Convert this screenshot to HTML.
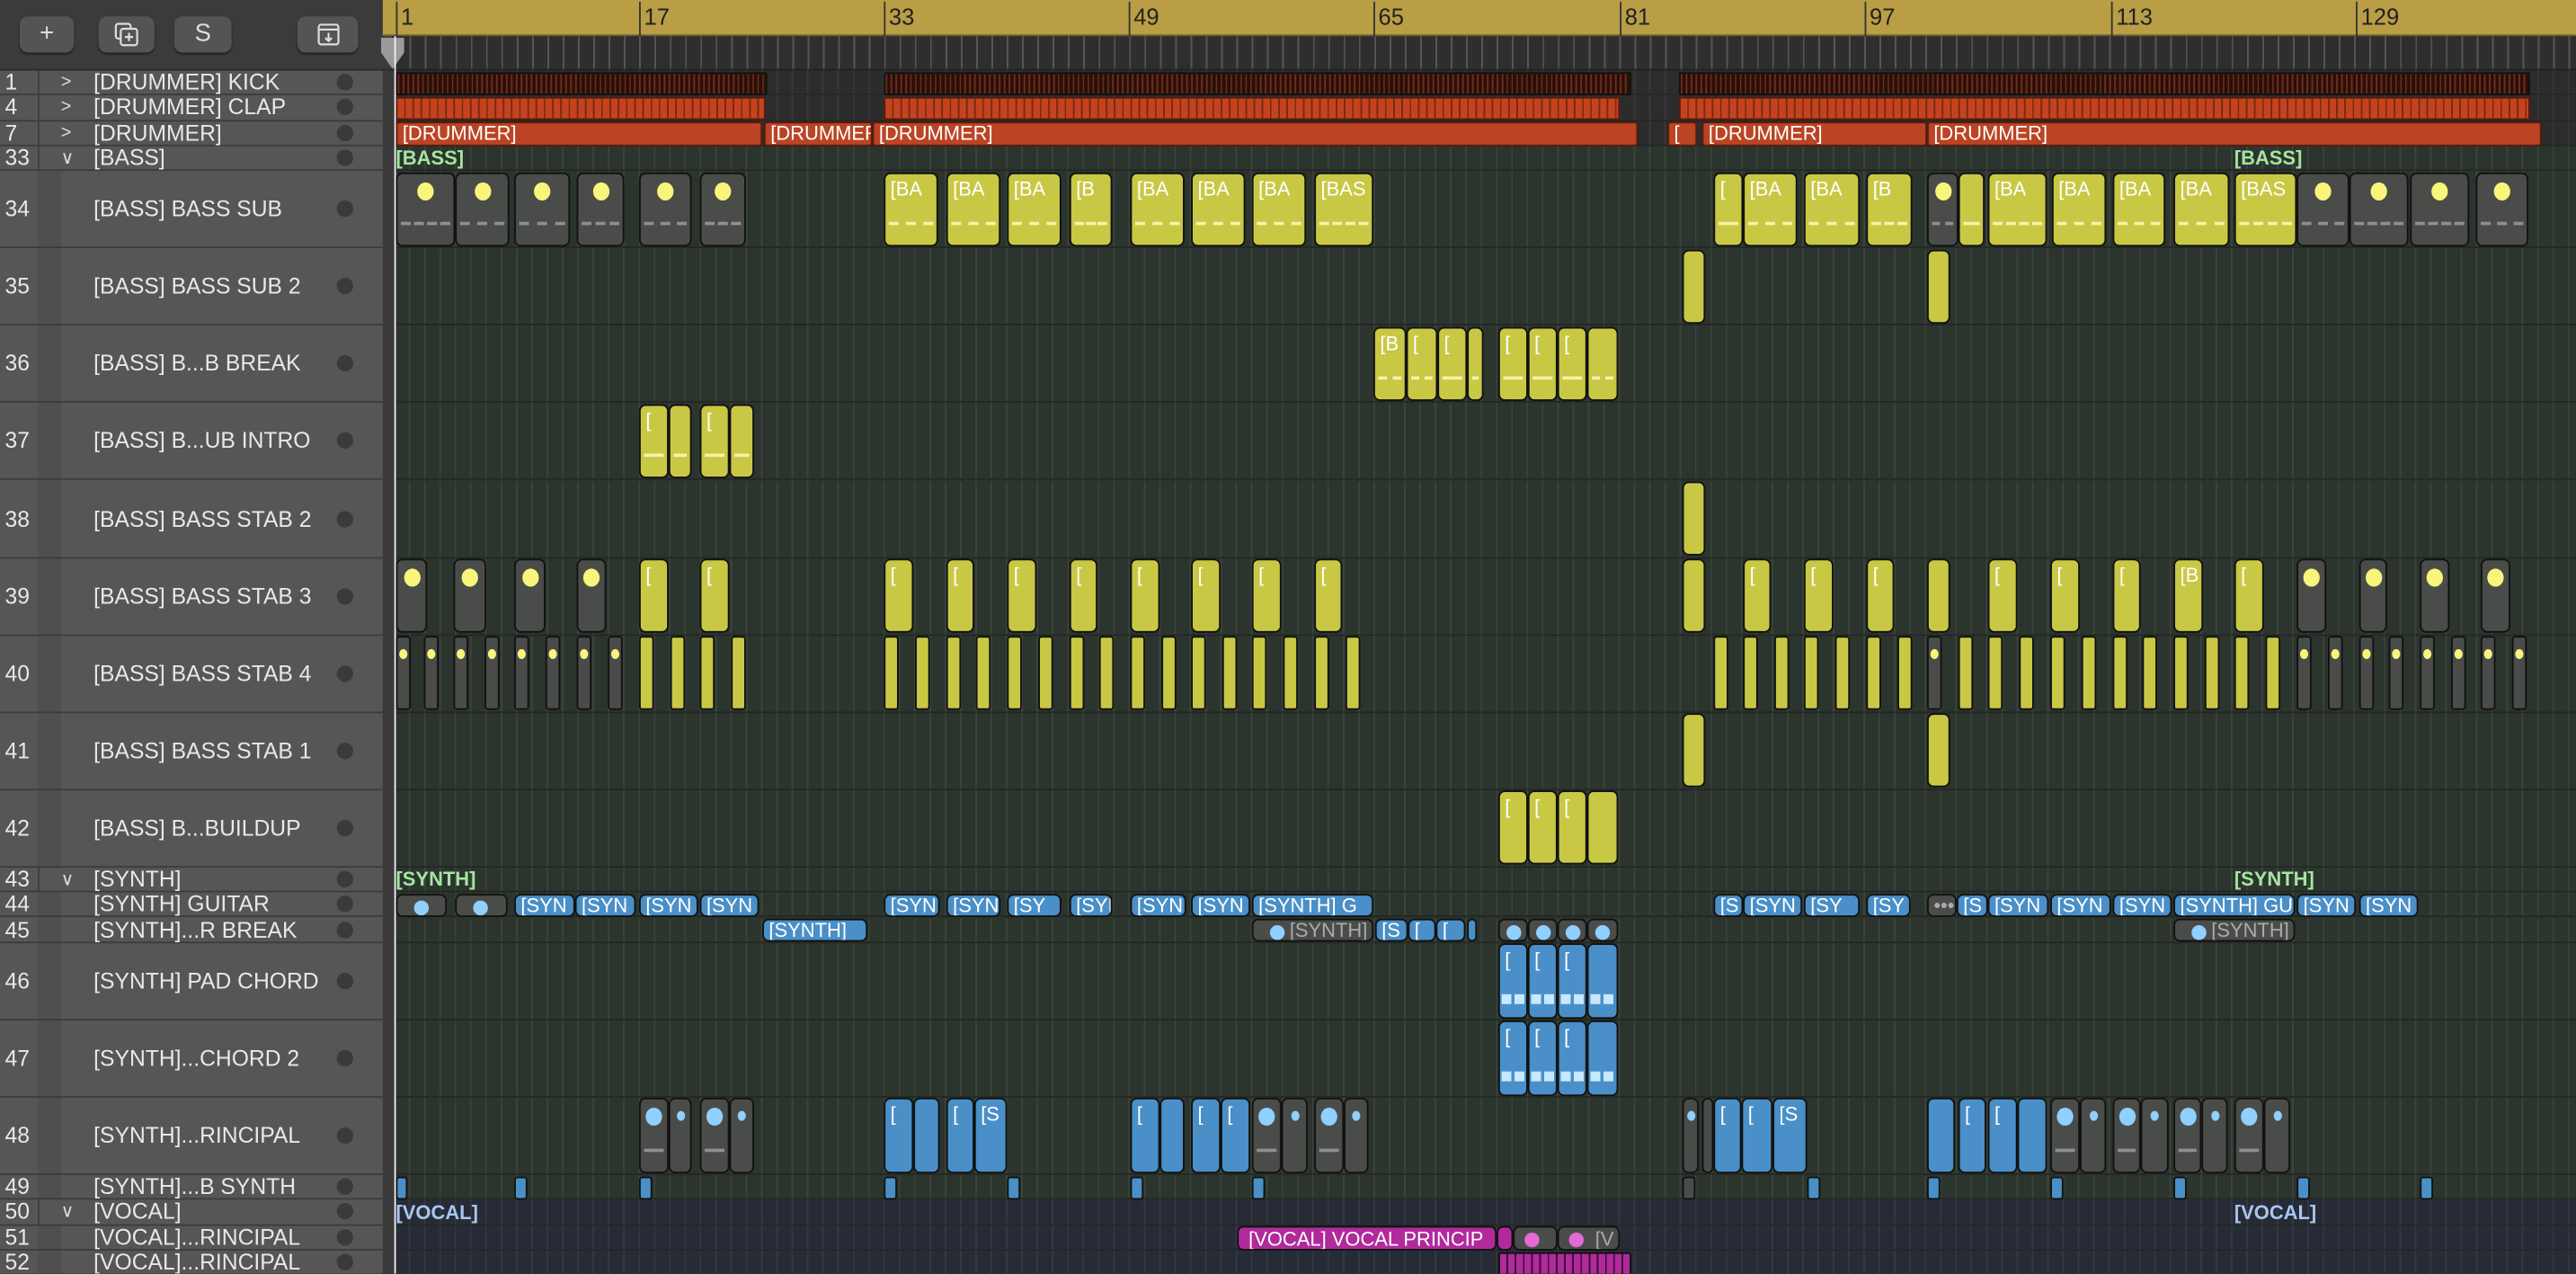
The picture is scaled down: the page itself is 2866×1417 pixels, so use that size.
<!DOCTYPE html>
<html><head><meta charset="utf-8"><style>
*{margin:0;padding:0;box-sizing:border-box}
body{width:2866px;height:1416px;overflow:hidden;background:#2b342d;font-family:"Liberation Sans",sans-serif}
#root{position:absolute;left:0;top:0;width:1568px;height:775px;transform:scale(1.82781);transform-origin:0 0;overflow:hidden}
.abs{position:absolute}
#lefthdr{left:0;top:0;width:238px;height:43px;background:#3b3b3b;border-bottom:1px solid #2a2a2a}
.btn{position:absolute;top:10px;height:22px;background:#545454;border-radius:5px;color:#ddd;font-size:15px;text-align:center;line-height:22px;box-shadow:0 1px 1px #222}
#ruler{left:233px;top:0;width:1335px;height:22px;background:#b99e46;border-bottom:1px solid #6d5c2a}
#ticks{left:238px;top:22px;width:1330px;height:21px;background:#2e2e2e repeating-linear-gradient(90deg,transparent 0 8.3px,#555 8.3px 9.32px);background-position:3px 0;border-bottom:1px solid #222}
.rn{position:absolute;top:1px;font-size:14px;color:#222;border-left:1px solid #333;padding-left:2px;height:21px;line-height:18px}
#left{left:0;top:43px;width:233px;height:733px;background:#565656}
#strip{left:233px;top:43px;width:7px;height:733px;background:#3a3a3a}
.tr{position:absolute;left:0;width:233px;border-bottom:1px solid #3c3c3c;color:#e8e8e8;font-size:13.5px}
.tr .n{position:absolute;left:3px;width:20px;top:50%;transform:translateY(-50%)}
.tr .nm{position:absolute;left:57px;top:50%;transform:translateY(-50%);white-space:nowrap}
.tr .ch{position:absolute;left:37px;top:50%;transform:translateY(-50%);font-size:11px;color:#ddd}
.tr .d{position:absolute;left:205px;top:50%;margin-top:-5px;width:10px;height:10px;border-radius:50%;background:#3a3a3a}
.col{position:absolute;left:23px;width:1px;background:#3e3e3e}
.ind{position:absolute;left:23px;width:14px;background:#4f4f4f}
#tl{left:240px;top:43px;width:1328px;height:733px}
.lane{position:absolute;left:240px;width:1328px;border-bottom:1px solid #242824;background-image:repeating-linear-gradient(90deg,transparent 0 8.32px,#3b443c 8.32px 9.32px);background-position:0.5px 0}
.dr{background-color:#2c2c2c;background-image:repeating-linear-gradient(90deg,transparent 0 8.32px,#383838 8.32px 9.32px)}
.vo{background-color:#272b35;background-image:repeating-linear-gradient(90deg,transparent 0 8.32px,#343845 8.32px 9.32px)}
.c{position:absolute;border:1px solid #111;border-radius:4px;overflow:hidden;white-space:nowrap;font-size:12px;color:#fff;padding:2px 0 0 3px;line-height:14px}
.y{background:#c9c845}
.g{background:#4a4c4a;color:#aaa}
.b{background:#4a8fc7}
.m{background:#b02a9c}
.o{background:#bb4424;border-radius:2px;border-color:#5a1b0c}
.k{background:#3a1a12 repeating-linear-gradient(90deg,#6b2d1d 0 1px,#2a0f09 1px 3px);border-radius:1px;border-color:#111}
.cl{background:#c4431f repeating-linear-gradient(90deg,#c4431f 0 4px,#7a2a14 4px 5px);border-radius:1px;border-color:#5a1b0c}
.y.big::after,.g.big::after{content:"";position:absolute;left:2px;right:2px;bottom:9px;height:3px;border-top:2px dashed #f5f3a8}
.g.big::after{border-top-color:#8f8f8f}
.dot{position:absolute;left:50%;margin-left:-5px;top:5px;width:10px;height:11px;border-radius:50%;background:#f8f57a}
.dot.s{width:5px;height:6px;margin-left:-2.5px;top:7px}
.bd{background:#8fd0ff}
.pd{background:#e46ad4}
.hd .dot{top:3px;left:10px;margin-left:0;width:9px;height:9px}
.lbl{position:absolute;font-size:12px;font-weight:bold;color:#a5e5a0}
.t34{top:105px;height:45px}.t35{top:152px;height:45px}.t36{top:199px;height:45px}.t37{top:246px;height:45px}.t38{top:293px;height:45px}.t39{top:340px;height:45px}.t40{top:387px;height:45px}.t41{top:434px;height:45px}.t42{top:481px;height:45px}
.t44{top:543.5px;height:14.5px;padding-top:0;line-height:13px}.t45{top:558.8px;height:14.5px;padding-top:0;line-height:13px}.t46{top:574px;height:46px}.t47{top:621px;height:46px}.t48{top:668px;height:46px}.t49{top:715.5px;height:14.5px}
.t51{top:746px;height:15px;padding-top:0;line-height:14px}.t52{top:761.5px;height:15px}
.t1{top:43.5px;height:14.5px}.t4{top:58.8px;height:14.5px}.t7{top:74px;height:14.5px;padding-top:0;line-height:13px}
.b.big::after{content:"";position:absolute;left:1px;right:1px;bottom:8px;height:6px;background:repeating-linear-gradient(90deg,#c8e8ff 0 6px,transparent 6px 8px)}
</style></head><body><div id="root">

<div id="lefthdr" class="abs">
<div class="btn" style="left:12px;width:33px">+</div>
<div class="btn" style="left:60px;width:34px"><svg width="16" height="16" viewBox="0 0 16 16" style="margin-top:3px"><rect x="1.5" y="1.5" width="9" height="9" rx="1.5" fill="none" stroke="#ddd" stroke-width="1.2"/><rect x="4.5" y="4.5" width="10" height="10" rx="1.5" fill="#545454" stroke="#ddd" stroke-width="1.2"/><path d="M9.5 7v5M7 9.5h5" stroke="#ddd" stroke-width="1.2"/></svg></div>
<div class="btn" style="left:106px;width:35px">S</div>
<div class="btn" style="left:181px;width:37px"><svg width="16" height="16" viewBox="0 0 16 16" style="margin-top:3px"><rect x="2" y="2" width="12" height="12" rx="1.5" fill="none" stroke="#ddd" stroke-width="1.2"/><path d="M2 5h12M8 7v5M6 10l2 2 2-2" fill="none" stroke="#ddd" stroke-width="1.2"/></svg></div>
</div>
<div id="ruler" class="abs">
<div class="rn" style="left:8px">1</div><div class="rn" style="left:156px">17</div><div class="rn" style="left:305px">33</div><div class="rn" style="left:454px">49</div><div class="rn" style="left:603px">65</div><div class="rn" style="left:753px">81</div><div class="rn" style="left:902px">97</div><div class="rn" style="left:1052px">113</div><div class="rn" style="left:1201px">129</div>
</div>
<div id="ticks" class="abs"></div>
<svg class="abs" style="left:230px;top:22px" width="18" height="21"><path d="M2 1h14v9l-7 10-7-10z" fill="#9a9a9a"/></svg>

<div id="left" class="abs">
<div class="col" style="top:0;height:733px"></div>
<div class="ind" style="top:61px;height:424px"></div>
<div class="ind" style="top:500px;height:187px"></div>
<div class="ind" style="top:702px;height:31px"></div>
</div>
<div class="abs" style="left:0;top:43px">
<div class="tr" style="top:0;height:15.3px"><span class="n">1</span><span class="ch">&gt;</span><span class="nm">[DRUMMER] KICK</span><span class="d"></span></div>
<div class="tr" style="top:15.3px;height:15.3px"><span class="n">4</span><span class="ch">&gt;</span><span class="nm">[DRUMMER] CLAP</span><span class="d"></span></div>
<div class="tr" style="top:30.6px;height:15.3px"><span class="n">7</span><span class="ch">&gt;</span><span class="nm">[DRUMMER]</span><span class="d"></span></div>
<div class="tr" style="top:45.9px;height:15.3px"><span class="n">33</span><span class="ch">&#8744;</span><span class="nm">[BASS]</span><span class="d"></span></div>
<div class="tr" style="top:61.2px;height:47px"><span class="n">34</span><span class="nm">[BASS] BASS SUB</span><span class="d"></span></div>
<div class="tr" style="top:108.3px;height:47px"><span class="n">35</span><span class="nm">[BASS] BASS SUB 2</span><span class="d"></span></div>
<div class="tr" style="top:155.4px;height:47px"><span class="n">36</span><span class="nm">[BASS] B...B BREAK</span><span class="d"></span></div>
<div class="tr" style="top:202.4px;height:47px"><span class="n">37</span><span class="nm">[BASS] B...UB INTRO</span><span class="d"></span></div>
<div class="tr" style="top:249.5px;height:47px"><span class="n">38</span><span class="nm">[BASS] BASS STAB 2</span><span class="d"></span></div>
<div class="tr" style="top:296.6px;height:47px"><span class="n">39</span><span class="nm">[BASS] BASS STAB 3</span><span class="d"></span></div>
<div class="tr" style="top:343.7px;height:47px"><span class="n">40</span><span class="nm">[BASS] BASS STAB 4</span><span class="d"></span></div>
<div class="tr" style="top:390.7px;height:47px"><span class="n">41</span><span class="nm">[BASS] BASS STAB 1</span><span class="d"></span></div>
<div class="tr" style="top:437.8px;height:47px"><span class="n">42</span><span class="nm">[BASS] B...BUILDUP</span><span class="d"></span></div>
<div class="tr" style="top:484.9px;height:15.3px"><span class="n">43</span><span class="ch">&#8744;</span><span class="nm">[SYNTH]</span><span class="d"></span></div>
<div class="tr" style="top:500.2px;height:15.3px"><span class="n">44</span><span class="nm">[SYNTH] GUITAR</span><span class="d"></span></div>
<div class="tr" style="top:515.5px;height:15.3px"><span class="n">45</span><span class="nm">[SYNTH]...R BREAK</span><span class="d"></span></div>
<div class="tr" style="top:530.8px;height:47px"><span class="n">46</span><span class="nm">[SYNTH] PAD CHORD</span><span class="d"></span></div>
<div class="tr" style="top:577.8px;height:47px"><span class="n">47</span><span class="nm">[SYNTH]...CHORD 2</span><span class="d"></span></div>
<div class="tr" style="top:624.9px;height:47px"><span class="n">48</span><span class="nm">[SYNTH]...RINCIPAL</span><span class="d"></span></div>
<div class="tr" style="top:672px;height:15.3px"><span class="n">49</span><span class="nm">[SYNTH]...B SYNTH</span><span class="d"></span></div>
<div class="tr" style="top:687.3px;height:15.3px"><span class="n">50</span><span class="ch">&#8744;</span><span class="nm">[VOCAL]</span><span class="d"></span></div>
<div class="tr" style="top:702.6px;height:15.3px"><span class="n">51</span><span class="nm">[VOCAL]...RINCIPAL</span><span class="d"></span></div>
<div class="tr" style="top:717.9px;height:15.3px"><span class="n">52</span><span class="nm">[VOCAL]...RINCIPAL</span><span class="d"></span></div>
</div>
<div id="strip" class="abs"></div>

<!-- lanes -->
<div class="lane dr" style="top:43px;height:15.3px"></div>
<div class="lane dr" style="top:58.3px;height:15.3px"></div>
<div class="lane dr" style="top:73.6px;height:15.3px"></div>
<div class="lane" style="top:88.9px;height:15.3px"></div>
<div class="lane" style="top:104.2px;height:47.1px"></div>
<div class="lane" style="top:151.3px;height:47.1px"></div>
<div class="lane" style="top:198.4px;height:47px"></div>
<div class="lane" style="top:245.4px;height:47.1px"></div>
<div class="lane" style="top:292.5px;height:47.1px"></div>
<div class="lane" style="top:339.6px;height:47.1px"></div>
<div class="lane" style="top:386.7px;height:47px"></div>
<div class="lane" style="top:433.7px;height:47.1px"></div>
<div class="lane" style="top:480.8px;height:47.1px"></div>
<div class="lane" style="top:527.9px;height:15.3px"></div>
<div class="lane" style="top:543.2px;height:15.3px"></div>
<div class="lane" style="top:558.5px;height:15.3px"></div>
<div class="lane" style="top:573.8px;height:47px"></div>
<div class="lane" style="top:620.8px;height:47.1px"></div>
<div class="lane" style="top:667.9px;height:47.1px"></div>
<div class="lane" style="top:715px;height:15.3px"></div>
<div class="lane vo" style="top:730.3px;height:15.3px"></div>
<div class="lane vo" style="top:745.6px;height:15.3px"></div>
<div class="lane vo" style="top:760.9px;height:15.3px"></div>

<!-- drummer -->
<div class="c k t1" style="left:241px;width:226px"></div>
<div class="c k t1" style="left:538px;width:455px"></div>
<div class="c k t1" style="left:1022px;width:518px"></div>
<div class="c cl t4" style="left:241px;width:225px"></div>
<div class="c cl t4" style="left:538px;width:448px"></div>
<div class="c cl t4" style="left:1022px;width:518px"></div>
<div class="c o t7" style="left:241px;width:223px">[DRUMMER]</div>
<div class="c o t7" style="left:465px;width:66px">[DRUMMER]</div>
<div class="c o t7" style="left:531px;width:466px">[DRUMMER]</div>
<div class="c o t7" style="left:1015px;width:18px">[</div>
<div class="c o t7" style="left:1036px;width:137px">[DRUMMER]</div>
<div class="c o t7" style="left:1173px;width:374px">[DRUMMER]</div>

<div class="lbl" style="left:241px;top:89px">[BASS]</div>
<div class="lbl" style="left:1360px;top:89px">[BASS]</div>

<!-- 34 -->
<div class="c g big t34" style="left:241px;width:36px"><i class="dot"></i></div>
<div class="c g big t34" style="left:277px;width:33px"><i class="dot"></i></div>
<div class="c g big t34" style="left:313px;width:34px"><i class="dot"></i></div>
<div class="c g big t34" style="left:351px;width:29px"><i class="dot"></i></div>
<div class="c g big t34" style="left:389px;width:32px"><i class="dot"></i></div>
<div class="c g big t34" style="left:426px;width:28px"><i class="dot"></i></div>
<div class="c y big t34" style="left:538px;width:33px">[BA</div>
<div class="c y big t34" style="left:576px;width:33px">[BA</div>
<div class="c y big t34" style="left:613px;width:33px">[BA</div>
<div class="c y big t34" style="left:651px;width:26px">[B</div>
<div class="c y big t34" style="left:688px;width:33px">[BA</div>
<div class="c y big t34" style="left:725px;width:33px">[BA</div>
<div class="c y big t34" style="left:762px;width:33px">[BA</div>
<div class="c y big t34" style="left:800px;width:36px">[BAS</div>
<div class="c y big t34" style="left:1043px;width:18px">[</div>
<div class="c y big t34" style="left:1061px;width:33px">[BA</div>
<div class="c y big t34" style="left:1098px;width:34px">[BA</div>
<div class="c y big t34" style="left:1136px;width:28px">[B</div>
<div class="c g big t34" style="left:1173px;width:19px"><i class="dot"></i></div>
<div class="c y big t34" style="left:1192px;width:16px"></div>
<div class="c y big t34" style="left:1210px;width:36px">[BA</div>
<div class="c y big t34" style="left:1249px;width:33px">[BA</div>
<div class="c y big t34" style="left:1286px;width:32px">[BA</div>
<div class="c y big t34" style="left:1323px;width:34px">[BA</div>
<div class="c y big t34" style="left:1360px;width:38px">[BAS</div>
<div class="c g big t34" style="left:1398px;width:32px"><i class="dot"></i></div>
<div class="c g big t34" style="left:1430px;width:36px"><i class="dot"></i></div>
<div class="c g big t34" style="left:1467px;width:36px"><i class="dot"></i></div>
<div class="c g big t34" style="left:1507px;width:32px"><i class="dot"></i></div>

<!-- 35 -->
<div class="c y t35" style="left:1024px;width:14px"></div>
<div class="c y t35" style="left:1173px;width:14px"></div>
<!-- 36 -->
<div class="c y big t36" style="left:836px;width:20px">[B</div>
<div class="c y big t36" style="left:856px;width:19px">[</div>
<div class="c y big t36" style="left:875px;width:18px">[</div>
<div class="c y big t36" style="left:893px;width:10px"></div>
<div class="c y big t36" style="left:912px;width:18px">[</div>
<div class="c y big t36" style="left:930px;width:18px">[</div>
<div class="c y big t36" style="left:948px;width:18px">[</div>
<div class="c y big t36" style="left:966px;width:19px"></div>
<!-- 37 -->
<div class="c y big t37" style="left:389px;width:18px">[</div>
<div class="c y big t37" style="left:407px;width:14px"></div>
<div class="c y big t37" style="left:426px;width:18px">[</div>
<div class="c y big t37" style="left:444px;width:15px"></div>
<!-- 38 -->
<div class="c y t38" style="left:1024px;width:14px"></div>
<!-- 39 -->
<div class="c g t39" style="left:241px;width:19px"><i class="dot"></i></div>
<div class="c g t39" style="left:276px;width:20px"><i class="dot"></i></div>
<div class="c g t39" style="left:313px;width:19px"><i class="dot"></i></div>
<div class="c g t39" style="left:351px;width:18px"><i class="dot"></i></div>
<div class="c y t39" style="left:389px;width:18px">[</div>
<div class="c y t39" style="left:426px;width:18px">[</div>
<div class="c y t39" style="left:538px;width:18px">[</div>
<div class="c y t39" style="left:576px;width:17px">[</div>
<div class="c y t39" style="left:613px;width:18px">[</div>
<div class="c y t39" style="left:651px;width:17px">[</div>
<div class="c y t39" style="left:688px;width:18px">[</div>
<div class="c y t39" style="left:725px;width:18px">[</div>
<div class="c y t39" style="left:762px;width:18px">[</div>
<div class="c y t39" style="left:800px;width:17px">[</div>
<div class="c y t39" style="left:1024px;width:14px"></div>
<div class="c y t39" style="left:1061px;width:17px">[</div>
<div class="c y t39" style="left:1098px;width:18px">[</div>
<div class="c y t39" style="left:1136px;width:17px">[</div>
<div class="c y t39" style="left:1173px;width:14px"></div>
<div class="c y t39" style="left:1210px;width:18px">[</div>
<div class="c y t39" style="left:1248px;width:18px">[</div>
<div class="c y t39" style="left:1286px;width:17px">[</div>
<div class="c y t39" style="left:1323px;width:18px">[B</div>
<div class="c y t39" style="left:1360px;width:18px">[</div>
<div class="c g t39" style="left:1398px;width:18px"><i class="dot"></i></div>
<div class="c g t39" style="left:1436px;width:17px"><i class="dot"></i></div>
<div class="c g t39" style="left:1473px;width:18px"><i class="dot"></i></div>
<div class="c g t39" style="left:1510px;width:18px"><i class="dot"></i></div>
<!-- 40 -->
<div class="c g t40" style="left:241px;width:9px;border-radius:2px"><i class="dot s"></i></div>
<div class="c g t40" style="left:258px;width:9px;border-radius:2px"><i class="dot s"></i></div>
<div class="c g t40" style="left:276px;width:9px;border-radius:2px"><i class="dot s"></i></div>
<div class="c g t40" style="left:295px;width:9px;border-radius:2px"><i class="dot s"></i></div>
<div class="c g t40" style="left:313px;width:9px;border-radius:2px"><i class="dot s"></i></div>
<div class="c g t40" style="left:332px;width:9px;border-radius:2px"><i class="dot s"></i></div>
<div class="c g t40" style="left:351px;width:9px;border-radius:2px"><i class="dot s"></i></div>
<div class="c g t40" style="left:370px;width:9px;border-radius:2px"><i class="dot s"></i></div>
<div class="c y t40" style="left:389px;width:9px;border-radius:2px"></div>
<div class="c y t40" style="left:408px;width:9px;border-radius:2px"></div>
<div class="c y t40" style="left:426px;width:9px;border-radius:2px"></div>
<div class="c y t40" style="left:445px;width:9px;border-radius:2px"></div>
<div class="c y t40" style="left:538px;width:9px;border-radius:2px"></div>
<div class="c y t40" style="left:557px;width:9px;border-radius:2px"></div>
<div class="c y t40" style="left:576px;width:9px;border-radius:2px"></div>
<div class="c y t40" style="left:594px;width:9px;border-radius:2px"></div>
<div class="c y t40" style="left:613px;width:9px;border-radius:2px"></div>
<div class="c y t40" style="left:632px;width:9px;border-radius:2px"></div>
<div class="c y t40" style="left:651px;width:9px;border-radius:2px"></div>
<div class="c y t40" style="left:669px;width:9px;border-radius:2px"></div>
<div class="c y t40" style="left:688px;width:9px;border-radius:2px"></div>
<div class="c y t40" style="left:707px;width:9px;border-radius:2px"></div>
<div class="c y t40" style="left:725px;width:9px;border-radius:2px"></div>
<div class="c y t40" style="left:744px;width:9px;border-radius:2px"></div>
<div class="c y t40" style="left:762px;width:9px;border-radius:2px"></div>
<div class="c y t40" style="left:781px;width:9px;border-radius:2px"></div>
<div class="c y t40" style="left:800px;width:9px;border-radius:2px"></div>
<div class="c y t40" style="left:819px;width:9px;border-radius:2px"></div>
<div class="c y t40" style="left:1043px;width:9px;border-radius:2px"></div>
<div class="c y t40" style="left:1061px;width:9px;border-radius:2px"></div>
<div class="c y t40" style="left:1080px;width:9px;border-radius:2px"></div>
<div class="c y t40" style="left:1098px;width:9px;border-radius:2px"></div>
<div class="c y t40" style="left:1117px;width:9px;border-radius:2px"></div>
<div class="c y t40" style="left:1136px;width:9px;border-radius:2px"></div>
<div class="c y t40" style="left:1155px;width:9px;border-radius:2px"></div>
<div class="c g t40" style="left:1173px;width:9px;border-radius:2px"><i class="dot s"></i></div>
<div class="c y t40" style="left:1192px;width:9px;border-radius:2px"></div>
<div class="c y t40" style="left:1210px;width:9px;border-radius:2px"></div>
<div class="c y t40" style="left:1229px;width:9px;border-radius:2px"></div>
<div class="c y t40" style="left:1248px;width:9px;border-radius:2px"></div>
<div class="c y t40" style="left:1267px;width:9px;border-radius:2px"></div>
<div class="c y t40" style="left:1286px;width:9px;border-radius:2px"></div>
<div class="c y t40" style="left:1304px;width:9px;border-radius:2px"></div>
<div class="c y t40" style="left:1323px;width:9px;border-radius:2px"></div>
<div class="c y t40" style="left:1342px;width:9px;border-radius:2px"></div>
<div class="c y t40" style="left:1360px;width:9px;border-radius:2px"></div>
<div class="c y t40" style="left:1379px;width:9px;border-radius:2px"></div>
<div class="c g t40" style="left:1398px;width:9px;border-radius:2px"><i class="dot s"></i></div>
<div class="c g t40" style="left:1417px;width:9px;border-radius:2px"><i class="dot s"></i></div>
<div class="c g t40" style="left:1436px;width:9px;border-radius:2px"><i class="dot s"></i></div>
<div class="c g t40" style="left:1454px;width:9px;border-radius:2px"><i class="dot s"></i></div>
<div class="c g t40" style="left:1473px;width:9px;border-radius:2px"><i class="dot s"></i></div>
<div class="c g t40" style="left:1492px;width:9px;border-radius:2px"><i class="dot s"></i></div>
<div class="c g t40" style="left:1510px;width:9px;border-radius:2px"><i class="dot s"></i></div>
<div class="c g t40" style="left:1529px;width:9px;border-radius:2px"><i class="dot s"></i></div>
<!-- 41 -->
<div class="c y t41" style="left:1024px;width:14px"></div>
<div class="c y t41" style="left:1173px;width:14px"></div>
<!-- 42 -->
<div class="c y t42" style="left:912px;width:18px">[</div>
<div class="c y t42" style="left:930px;width:18px">[</div>
<div class="c y t42" style="left:948px;width:18px">[</div>
<div class="c y t42" style="left:966px;width:19px"></div>

<div class="lbl" style="left:241px;top:528px">[SYNTH]</div>
<div class="lbl" style="left:1360px;top:528px">[SYNTH]</div>

<!-- 44 -->
<div class="c g hd t44" style="left:241px;width:31px"><i class="dot bd"></i></div>
<div class="c g hd t44" style="left:277px;width:32px"><i class="dot bd"></i></div>
<div class="c b t44" style="left:313px;width:37px">[SYN</div>
<div class="c b t44" style="left:350px;width:37px">[SYN</div>
<div class="c b t44" style="left:389px;width:36px">[SYN</div>
<div class="c b t44" style="left:426px;width:36px">[SYN</div>
<div class="c b t44" style="left:538px;width:34px">[SYN</div>
<div class="c b t44" style="left:576px;width:33px">[SYN</div>
<div class="c b t44" style="left:613px;width:33px">[SY</div>
<div class="c b t44" style="left:651px;width:26px">[SYN</div>
<div class="c b t44" style="left:688px;width:34px">[SYN</div>
<div class="c b t44" style="left:725px;width:36px">[SYN</div>
<div class="c b t44" style="left:762px;width:74px">[SYNTH] G</div>
<div class="c b t44" style="left:1043px;width:18px">[S</div>
<div class="c b t44" style="left:1061px;width:36px">[SYN</div>
<div class="c b t44" style="left:1098px;width:34px">[SY</div>
<div class="c b t44" style="left:1136px;width:27px">[SY</div>
<div class="c g t44" style="left:1173px;width:18px">•••</div>
<div class="c b t44" style="left:1191px;width:19px">[S</div>
<div class="c b t44" style="left:1210px;width:37px">[SYN</div>
<div class="c b t44" style="left:1248px;width:37px">[SYN</div>
<div class="c b t44" style="left:1286px;width:36px">[SYN</div>
<div class="c b t44" style="left:1323px;width:74px">[SYNTH] GUI</div>
<div class="c b t44" style="left:1398px;width:36px">[SYN</div>
<div class="c b t44" style="left:1436px;width:36px">[SYN</div>
<!-- 45 -->
<div class="c b t45" style="left:464px;width:64px">[SYNTH]</div>
<div class="c g hd t45" style="left:762px;width:74px;padding-left:22px"><i class="dot bd"></i>[SYNTH]</div>
<div class="c b t45" style="left:837px;width:20px">[S</div>
<div class="c b t45" style="left:857px;width:17px">[</div>
<div class="c b t45" style="left:874px;width:18px">[</div>
<div class="c b t45" style="left:893px;width:6px"></div>
<div class="c g hd t45" style="left:912px;width:18px"><i class="dot bd" style="left:4px"></i></div>
<div class="c g hd t45" style="left:930px;width:18px"><i class="dot bd" style="left:4px"></i></div>
<div class="c g hd t45" style="left:948px;width:18px"><i class="dot bd" style="left:4px"></i></div>
<div class="c g hd t45" style="left:966px;width:19px"><i class="dot bd" style="left:4px"></i></div>
<div class="c g hd t45" style="left:1323px;width:74px;padding-left:22px"><i class="dot bd"></i>[SYNTH]</div>
<!-- 46/47 -->
<div class="c b big t46" style="left:912px;width:18px">[</div>
<div class="c b big t46" style="left:930px;width:18px">[</div>
<div class="c b big t46" style="left:948px;width:18px">[</div>
<div class="c b big t46" style="left:966px;width:19px"></div>
<div class="c b big t47" style="left:912px;width:18px">[</div>
<div class="c b big t47" style="left:930px;width:18px">[</div>
<div class="c b big t47" style="left:948px;width:18px">[</div>
<div class="c b big t47" style="left:966px;width:19px"></div>
<!-- 48 -->
<div class="c g big t48" style="left:389px;width:18px"><i class="dot bd"></i></div>
<div class="c g t48" style="left:407px;width:14px"><i class="dot s bd"></i></div>
<div class="c g big t48" style="left:426px;width:18px"><i class="dot bd"></i></div>
<div class="c g t48" style="left:444px;width:15px"><i class="dot s bd"></i></div>
<div class="c b t48" style="left:538px;width:18px">[</div>
<div class="c b t48" style="left:556px;width:16px"></div>
<div class="c b t48" style="left:576px;width:17px">[</div>
<div class="c b t48" style="left:593px;width:20px">[S</div>
<div class="c b t48" style="left:688px;width:18px">[</div>
<div class="c b t48" style="left:706px;width:15px"></div>
<div class="c b t48" style="left:725px;width:18px">[</div>
<div class="c b t48" style="left:743px;width:18px">[</div>
<div class="c g big t48" style="left:762px;width:18px"><i class="dot bd"></i></div>
<div class="c g t48" style="left:780px;width:16px"><i class="dot s bd"></i></div>
<div class="c g big t48" style="left:800px;width:18px"><i class="dot bd"></i></div>
<div class="c g t48" style="left:818px;width:15px"><i class="dot s bd"></i></div>
<div class="c g t48" style="left:1024px;width:10px"><i class="dot s bd"></i></div>
<div class="c g t48" style="left:1036px;width:7px"></div>
<div class="c b t48" style="left:1043px;width:17px">[</div>
<div class="c b t48" style="left:1060px;width:19px">[</div>
<div class="c b t48" style="left:1079px;width:21px">[S</div>
<div class="c b t48" style="left:1173px;width:17px"></div>
<div class="c b t48" style="left:1192px;width:17px">[</div>
<div class="c b t48" style="left:1210px;width:18px">[</div>
<div class="c b t48" style="left:1228px;width:18px"></div>
<div class="c g big t48" style="left:1248px;width:18px"><i class="dot bd"></i></div>
<div class="c g t48" style="left:1266px;width:16px"><i class="dot s bd"></i></div>
<div class="c g big t48" style="left:1286px;width:17px"><i class="dot bd"></i></div>
<div class="c g t48" style="left:1303px;width:17px"><i class="dot s bd"></i></div>
<div class="c g big t48" style="left:1323px;width:17px"><i class="dot bd"></i></div>
<div class="c g t48" style="left:1340px;width:16px"><i class="dot s bd"></i></div>
<div class="c g big t48" style="left:1360px;width:18px"><i class="dot bd"></i></div>
<div class="c g t48" style="left:1378px;width:16px"><i class="dot s bd"></i></div>
<!-- 49 -->
<div class="c b t49" style="left:241px;width:7px;border-radius:2px"></div>
<div class="c b t49" style="left:313px;width:8px;border-radius:2px"></div>
<div class="c b t49" style="left:389px;width:8px;border-radius:2px"></div>
<div class="c b t49" style="left:538px;width:8px;border-radius:2px"></div>
<div class="c b t49" style="left:613px;width:8px;border-radius:2px"></div>
<div class="c b t49" style="left:688px;width:8px;border-radius:2px"></div>
<div class="c b t49" style="left:762px;width:8px;border-radius:2px"></div>
<div class="c g t49" style="left:1024px;width:8px;border-radius:2px"></div>
<div class="c b t49" style="left:1100px;width:8px;border-radius:2px"></div>
<div class="c b t49" style="left:1173px;width:8px;border-radius:2px"></div>
<div class="c b t49" style="left:1248px;width:8px;border-radius:2px"></div>
<div class="c b t49" style="left:1323px;width:8px;border-radius:2px"></div>
<div class="c b t49" style="left:1398px;width:8px;border-radius:2px"></div>
<div class="c b t49" style="left:1473px;width:8px;border-radius:2px"></div>

<div class="lbl" style="left:241px;top:731px;color:#a9c6f2">[VOCAL]</div>
<div class="lbl" style="left:1360px;top:731px;color:#a9c6f2">[VOCAL]</div>
<!-- 51/52 -->
<div class="c m t51" style="left:753px;width:158px;padding-left:6px">[VOCAL] VOCAL PRINCIP</div>
<div class="c m t51" style="left:911px;width:10px"></div>
<div class="c g hd t51" style="left:921px;width:27px"><i class="dot pd" style="left:6px"></i></div>
<div class="c g hd t51" style="left:948px;width:38px;padding-left:22px"><i class="dot pd" style="left:6px"></i>[V</div>
<div class="c t52" style="left:912px;width:81px;border-radius:2px;background:repeating-linear-gradient(90deg,#b02a9c 0 4px,#3a0f33 4px 5px)"></div>

<div class="abs" style="left:239.5px;top:22px;width:1.2px;height:754px;background:#f0f0f0"></div>
</div></body></html>
